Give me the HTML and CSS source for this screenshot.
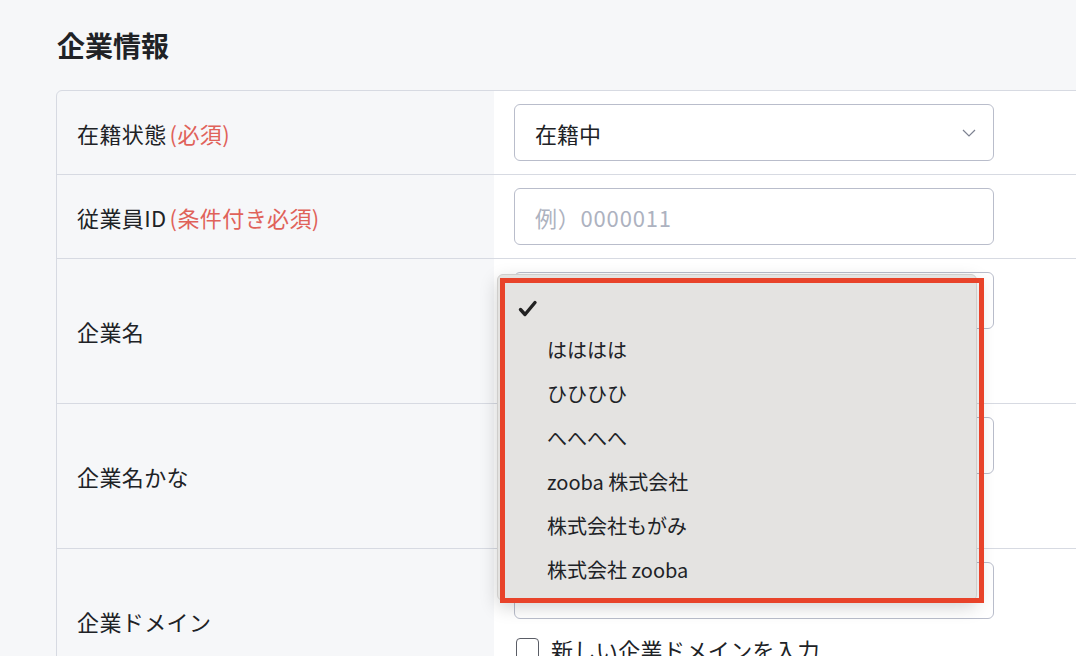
FILE: index.html
```html
<!DOCTYPE html>
<html lang="ja">
<head>
<meta charset="UTF-8">
<meta name="viewport" content="width=device-width, initial-scale=1.0">
<title>企業情報</title>
<link rel="stylesheet" href="styles.css">
</head>
<body>
<div class="page">
  <h1>企業情報</h1>

  <div class="card">
    <div class="row">
      <div class="label">在籍状態<span class="req">(必須)</span></div>
      <div class="value">
        <div class="field select">
          <span>在籍中</span>
          <svg class="chev" width="14" height="8" viewBox="0 0 14 8"><polyline points="1,1 7,7 13,1" fill="none" stroke="#7d8291" stroke-width="1.2"/></svg>
        </div>
      </div>
    </div>

    <div class="row">
      <div class="label">従業員ID<span class="req">(条件付き必須)</span></div>
      <div class="value">
        <div class="field"><span class="placeholder">例）0000011</span></div>
      </div>
    </div>

    <div class="row">
      <div class="label">企業名</div>
      <div class="value">
        <div class="select-wrap">
          <div class="field select">
            <span></span>
            <svg class="chev" width="14" height="8" viewBox="0 0 14 8"><polyline points="1,1 7,7 13,1" fill="none" stroke="#7d8291" stroke-width="1.2"/></svg>
          </div>
          <!-- open option list of the select -->
          <ul class="popup">
            <li class="checked">
              <svg class="check" width="20" height="18" viewBox="0 0 20 18"><path d="M2.5 9.5 L7 14.5 L17 2.5" fill="none" stroke="#222" stroke-width="3.4" stroke-linecap="round" stroke-linejoin="round"/></svg>
            </li>
            <li>はははは</li>
            <li>ひひひひ</li>
            <li>へへへへ</li>
            <li>zooba 株式会社</li>
            <li>株式会社もがみ</li>
            <li>株式会社 zooba</li>
          </ul>
          <div class="highlight"></div>
        </div>
        <label class="check-row"><span class="box"></span>新しい企業名を入力</label>
      </div>
    </div>

    <div class="row">
      <div class="label">企業名かな</div>
      <div class="value">
        <div class="field"><span class="placeholder"></span></div>
        <label class="check-row"><span class="box"></span>新しい企業名かなを入力</label>
      </div>
    </div>

    <div class="row">
      <div class="label">企業ドメイン</div>
      <div class="value">
        <div class="field"><span class="placeholder"></span></div>
        <label class="check-row"><span class="box"></span>新しい企業ドメインを入力</label>
      </div>
    </div>
  </div>
</div>
</body>
</html>
```

FILE: styles.css
```css
html, body {
  margin: 0;
  height: 100%;
  overflow: hidden;
}
body {
  background: #f6f7f9;
  color: #202226;
  font-family: "Noto Sans CJK JP", "Noto Sans", sans-serif;
}
.page {
  padding: 0 0 0 56px;
}
h1 {
  margin: 0;
  padding-top: 25px;
  padding-left: 1px;
  height: 90px;
  box-sizing: border-box;
  font-size: 28px;
  font-weight: 700;
  line-height: 40px;
}
.card {
  width: 1100px;
  border: 1px solid #d7dae2;
  border-radius: 6px 0 0 0;
  background: #f6f7f9;
}
.row {
  display: grid;
  grid-template-columns: 437px 1fr;
  border-bottom: 1px solid #d7dae2;
}
.label {
  display: flex;
  align-items: center;
  padding-left: 20px;
  font-size: 22px;
  letter-spacing: 0.4px;
}
.req {
  margin-left: 3px;
  color: #e0625a;
}
.value {
  background: #fff;
  padding: 13px 0 13px 20px;
}
.field {
  width: 480px;
  height: 57px;
  box-sizing: border-box;
  border: 1px solid #b9bdcb;
  border-radius: 6px;
  background: #fff;
  display: flex;
  align-items: center;
  justify-content: space-between;
  padding: 0 17px 0 20px;
  font-size: 22px;
}
.placeholder {
  color: #adb2c0;
  letter-spacing: 0.8px;
}
.check-row {
  display: flex;
  align-items: center;
  gap: 12px;
  height: 30px;
  margin: 15px 0 16px 2px;
  font-size: 22px;
  letter-spacing: 0.4px;
}
.box {
  width: 21px;
  height: 21px;
  border: 1.5px solid #5a5d66;
  border-radius: 4px;
  background: #fff;
}
.select-wrap {
  position: relative;
}
.popup {
  position: absolute;
  left: -17px;
  top: 2px;
  width: 480px;
  height: 327px;
  box-sizing: border-box;
  margin: 0;
  padding: 9px 0 0;
  list-style: none;
  background: #e4e3e1;
  border: 1px solid #cfcecc;
  border-radius: 6px;
  box-shadow: 0 6px 18px rgba(0, 0, 0, 0.18);
  font-size: 20px;
  z-index: 5;
}
.popup li {
  height: 44px;
  line-height: 44px;
  padding-left: 49px;
  position: relative;
}
.check {
  position: absolute;
  left: 20px;
  top: 16px;
}
.highlight {
  position: absolute;
  left: -14px;
  top: 6px;
  width: 484px;
  height: 325px;
  box-sizing: border-box;
  border: 5px solid #e8432a;
  z-index: 6;
}
```
